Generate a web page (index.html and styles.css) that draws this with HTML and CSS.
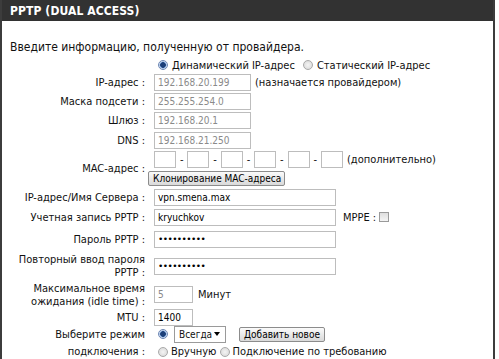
FILE: index.html
```html
<!DOCTYPE html>
<html>
<head>
<meta charset="utf-8">
<link rel="stylesheet" href="styles.css">
</head>
<body>
<div class="panel">
  <div class="header">PPTP (DUAL ACCESS)</div>
  <div class="content">
    <p class="intro">Введите информацию, полученную от провайдера.</p>
    <div class="row h16">
      <div class="label"></div>
      <div class="field">
        <span class="radio on"></span><span class="txt">Динамический IP-адрес</span>
        <span class="radio r2"></span><span class="txt">Статический IP-адрес</span>
      </div>
    </div>
    <div class="row">
      <div class="label">IP-адрес :</div>
      <div class="field"><span class="inp dis w97">192.168.20.199</span><span class="txt">(назначается провайдером)</span></div>
    </div>
    <div class="row">
      <div class="label">Маска подсети :</div>
      <div class="field"><span class="inp dis w97">255.255.254.0</span></div>
    </div>
    <div class="row">
      <div class="label">Шлюз :</div>
      <div class="field"><span class="inp dis w97">192.168.20.1</span></div>
    </div>
    <div class="row h20">
      <div class="label">DNS :</div>
      <div class="field"><span class="inp dis w97">192.168.21.250</span></div>
    </div>
    <div class="row mac">
      <div class="label">MAC-адрес :</div>
      <div class="field col">
        <div class="macline">
          <span class="inp mb"></span><span class="dash">-</span>
          <span class="inp mb"></span><span class="dash">-</span>
          <span class="inp mb"></span><span class="dash">-</span>
          <span class="inp mb"></span><span class="dash">-</span>
          <span class="inp mb"></span><span class="dash">-</span>
          <span class="inp mb"></span><span class="txt">(дополнительно)</span>
        </div>
        <div class="cloneline"><span class="btn clone">Клонирование MAC-адреса</span></div>
      </div>
    </div>
    <div class="row h20">
      <div class="label">IP-адрес/Имя Сервера :</div>
      <div class="field"><span class="inp w182">vpn.smena.max</span></div>
    </div>
    <div class="row h20">
      <div class="label">Учетная запись PPTP :</div>
      <div class="field"><span class="inp w182">kryuchkov</span><span class="txt mppe">MPPE :</span><span class="check"></span></div>
    </div>
    <div class="row h25">
      <div class="label">Пароль PPTP :</div>
      <div class="field"><span class="inp w182 pw">••••••••••</span></div>
    </div>
    <div class="row h28">
      <div class="label">Повторный ввод пароля PPTP :</div>
      <div class="field"><span class="inp w182 pw">••••••••••</span></div>
    </div>
    <div class="row h29">
      <div class="label">Максимальное время ожидания (idle time) :</div>
      <div class="field"><span class="inp dis w39">5</span><span class="txt minut">Минут</span></div>
    </div>
    <div class="row h16">
      <div class="label">MTU :</div>
      <div class="field"><span class="inp w39">1400</span></div>
    </div>
    <div class="row mode">
      <div class="label">Выберите режим подключения :</div>
      <div class="field col">
        <div class="line l1">
          <span class="radio on"></span><span class="select">Всегда<span class="caret"></span></span><span class="btn add">Добавить новое</span>
        </div>
        <div class="line l2">
          <span class="radio"></span><span class="txt t2">Вручную</span>
          <span class="radio r3"></span><span class="txt t3">Подключение по требованию</span>
        </div>
      </div>
    </div>
  </div>
</div>
</body>
</html>
```
FILE: styles.css
```css
* { box-sizing: border-box; }
html, body { margin: 0; padding: 0; background: #fff; }
body { font-family: "DejaVu Sans Condensed", "DejaVu Sans", sans-serif; font-size: 11px; color: #111; }
.panel {
  width: 495px;
  height: 359px;
  border-left: 2px solid #3c3c3c;
  border-right: 2px solid #3c3c3c;
  overflow: hidden;
}
.header {
  height: 21px;
  background: #323232;
  color: #fff;
  font-weight: bold;
  font-size: 12px;
  line-height: 22px;
  padding-left: 8px;
  letter-spacing: 0.1px;
}
.content { padding: 0 0 0 8px; }
.intro { margin: 0; padding-top: 20px; height: 36px; line-height: 13px; font-size: 12px; }
.row { display: flex; align-items: center; height: 19px; }
.h16 { height: 16px; }
.h20 { height: 20px; }
.h25 { height: 25px; }
.h28 { height: 28px; }
.h29 { height: 29px; }
.label { width: 138px; text-align: right; padding-right: 3px; line-height: 13px; flex: none; }
.field { display: flex; align-items: center; padding-left: 6px; }
.field.col { flex-direction: column; align-items: flex-start; }
.txt { margin-left: 4px; margin-right: 4px; }
.r2 { margin-left: 1px; }
.inp {
  display: inline-block;
  height: 17px;
  border: 1px solid #bdbdbd;
  background: #fff;
  line-height: 15px;
  padding-left: 3px;
  font-size: 10px;
  color: #000;
  flex: none;
}
.inp.dis { color: #8a8a8a; }
.w97 { width: 97px; }
.w182 { width: 182px; }
.w39 { width: 39px; }
.pw { font-size: 9px; letter-spacing: -0.6px; font-family: "DejaVu Sans", sans-serif; }
.row.mac { height: 37px; }
.mb { width: 22px; }
.dash { width: 11.4px; text-align: center; }
.macline { display: flex; align-items: center; height: 19px; }
.cloneline { display: flex; align-items: center; height: 18px; }
.btn {
  display: inline-block;
  height: 15px;
  line-height: 13px;
  padding: 0 4px;
  border: 1px solid #8c8c8c;
  border-radius: 2px;
  background: linear-gradient(#fbfbfb, #d9d9d9);
  font-size: 10px;
  color: #000;
  white-space: nowrap;
  text-align: center;
}
.clone { margin-left: -6px; width: 137px; }
.radio {
  display: inline-block;
  width: 10px; height: 10px;
  border-radius: 50%;
  border: 1px solid #a9a9a9;
  background: radial-gradient(#f4f4f4, #d6d6d6);
  flex: none;
  margin-left: 4px;
}
.radio.on { background: radial-gradient(circle, #1c3f78 0, #1c3f78 2.5px, #7fa7dc 3px, #e8eef8 4px); border-color: #6d87b4; }
.t2 { margin-left: 3px; margin-right: 1px; }
.r3 { margin-left: 3px; }
.t3 { margin-left: 2px; }
.mppe { margin-left: 7px; margin-right: 3px; }
.minut { margin-left: 5px; }
.check {
  display: inline-block;
  width: 10px; height: 10px;
  border: 1px solid #9a9a9a;
  background: linear-gradient(#dedede, #f4f4f4);
}
.row.mode { height: 38px; align-items: flex-start; }
.mode .label { line-height: 17px; padding-top: 1px; }
.line { display: flex; align-items: center; }
.l1 { height: 18px; }
.l2 { height: 17px; }
.select {
  display: inline-flex; align-items: center;
  height: 17px; width: 52px;
  border: 1px solid #9a9a9a;
  padding-left: 4px; margin-left: 6px;
  padding-right: 5px;
  font-size: 10px;
}
.caret { margin-left: auto; width: 0; height: 0; border-left: 3.5px solid transparent; border-right: 3.5px solid transparent; border-top: 4px solid #000; }
.add { margin-left: 13px; width: 86px; }
```
